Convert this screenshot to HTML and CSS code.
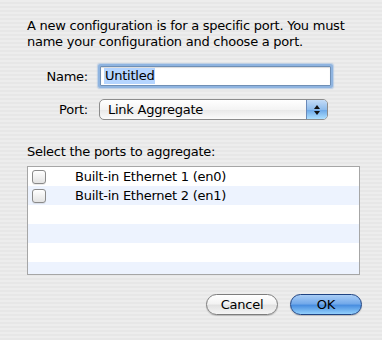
FILE: index.html
```html
<!DOCTYPE html>
<html>
<head>
<meta charset="utf-8">
<link rel="stylesheet" href="styles.css">
</head>
<body>
<div class="dialog">
  <p class="intro">A new configuration is for a specific port. You must name your configuration and choose a port.</p>
  <div class="form">
    <div class="row">
      <label class="lbl">Name:</label>
      <div class="field"><span class="sel">Untitled</span></div>
    </div>
    <div class="row">
      <label class="lbl">Port:</label>
      <div class="popup">
        <span class="popup-text">Link Aggregate</span>
        <span class="popup-arrows">
          <svg width="8" height="12" viewBox="0 0 8 12"><path d="M4 1 L7 5 L1 5 Z" fill="#111"/><path d="M4 11 L7 7 L1 7 Z" fill="#111"/></svg>
        </span>
      </div>
    </div>
  </div>
  <p class="section">Select the ports to aggregate:</p>
  <div class="table">
    <div class="trow"><span class="check"></span><span class="tname">Built-in Ethernet 1 (en0)</span></div>
    <div class="trow alt"><span class="check"></span><span class="tname">Built-in Ethernet 2 (en1)</span></div>
    <div class="trow"></div>
    <div class="trow alt"></div>
    <div class="trow"></div>
    <div class="trow alt short"></div>
  </div>
  <div class="buttons">
    <button class="btn">Cancel</button>
    <button class="btn default">OK</button>
  </div>
</div>
</body>
</html>
```
FILE: styles.css
```css
html, body {
  margin: 0;
  padding: 0;
}
body {
  width: 382px;
  height: 340px;
  background: repeating-linear-gradient(to bottom, #ededed 0, #ededed 2px, #e7e7e7 2px, #e7e7e7 4px);
  font-family: "DejaVu Sans", "Liberation Sans", sans-serif;
  font-size: 13px;
  letter-spacing: -0.25px;
  color: #000;
  overflow: hidden;
}
.dialog {
  display: flex;
  flex-direction: column;
  padding: 18px 22px 0 27px;
}
.intro {
  margin: 0;
  line-height: 16px;
  width: 340px;
}
.form {
  display: flex;
  flex-direction: column;
  gap: 13px;
  margin-top: 16px;
}
.row {
  display: flex;
  align-items: center;
}
.lbl {
  width: 61px;
  text-align: right;
  margin-right: 10px;
}
.field {
  width: 223px;
  height: 16px;
  background: #fff;
  border: 1px solid #6f8fb5;
  box-shadow: 0 0 0 2px #8fb4e0, 0 0 1px 3px rgba(143,180,224,0.5), inset 0 1px 1px rgba(0,0,0,0.15);
  border-radius: 1px;
  padding: 1px 3px;
  margin-left: 2px;
  display: flex;
  align-items: center;
}
.sel {
  background: #b5d5ff;
  padding: 0 1px;
  line-height: 16px;
}
.popup {
  position: relative;
  width: 227px;
  height: 19px;
  margin-left: 1px;
  border: 1px solid #8c8c8c;
  border-radius: 5px;
  background: linear-gradient(to bottom, #ffffff 0%, #f4f4f4 50%, #e8e8e8 51%, #fbfbfb 100%);
  display: flex;
  align-items: center;
  overflow: hidden;
}
.popup-text {
  flex: 1;
  padding-left: 8px;
}
.popup-arrows {
  width: 20px;
  height: 19px;
  border-left: 1px solid #6a89b8;
  background: linear-gradient(to bottom, #c4dcf7 0%, #8fbcec 50%, #6aa6e6 51%, #aee0ff 100%);
  display: flex;
  align-items: center;
  justify-content: center;
}
.section {
  margin: 24px 0 0 0;
  line-height: 16px;
}
.table {
  margin-top: 6px;
  width: 331px;
  border: 1px solid #a6a6a6;
  background: #fff;
  display: flex;
  flex-direction: column;
}
.trow {
  height: 19px;
  display: flex;
  align-items: center;
  background: #fff;
}
.trow.alt {
  background: #edf3fe;
}
.trow.short {
  height: 12px;
}
.check {
  width: 12px;
  height: 12px;
  margin-left: 4px;
  border: 1px solid #8a8a8a;
  border-radius: 3px;
  background: linear-gradient(to bottom, #ffffff 0%, #f1f1f1 50%, #e3e3e3 100%);
  box-shadow: 0 1px 0 rgba(0,0,0,0.08);
}
.tname {
  margin-left: 29px;
}
.buttons {
  display: flex;
  justify-content: flex-end;
  gap: 12px;
  margin-top: 19px;
  margin-right: -2px;
}
.btn {
  width: 72px;
  height: 21px;
  border-radius: 11px;
  font-family: inherit;
  font-size: 13px;
  letter-spacing: -0.25px;
  padding: 0;
  border: 1px solid #7d7d7d;
  background: linear-gradient(to bottom, #ffffff 0%, #f3f3f3 45%, #e2e2e2 55%, #f5f5f5 100%);
  box-shadow: 0 1px 1px rgba(0,0,0,0.2);
  color: #000;
}
.btn.default {
  border-color: #1f4382;
  background: linear-gradient(to bottom, #a9cdf6 0%, #74aaea 45%, #4a8fe0 55%, #93d0fc 100%);
}
```
